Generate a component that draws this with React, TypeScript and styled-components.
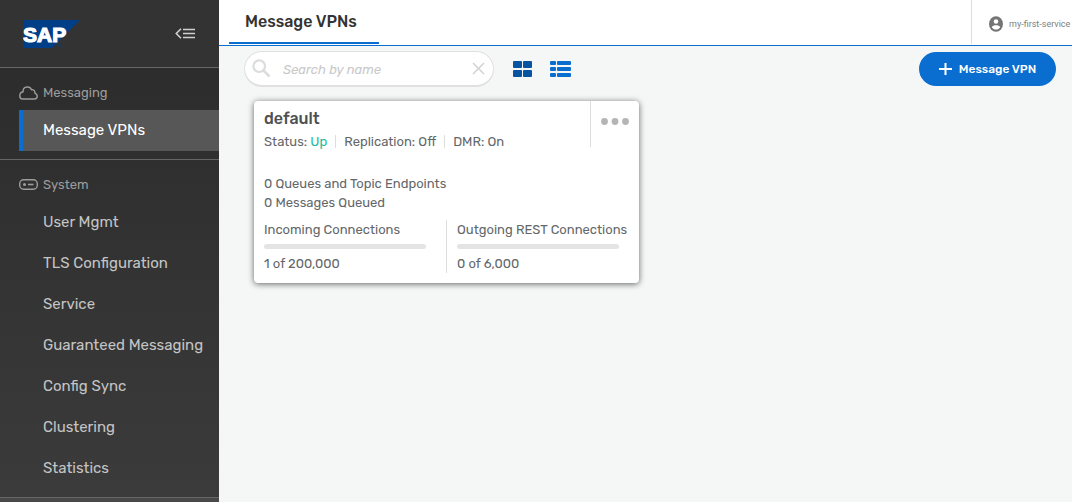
import React from 'react';
import styled, { createGlobalStyle } from 'styled-components';

const GlobalStyle = createGlobalStyle`
  *, *::before, *::after { box-sizing: border-box; }
  body {
    margin: 0;
    background: #f5f7f7;
    font-family: Rubik, Roboto, "Liberation Sans", sans-serif;
    color: #63676a;
  }
  button, input { font-family: inherit; }
  h1, h2, p, ul { margin: 0; padding: 0; font-weight: 400; }
  svg { display: block; flex: none; }
`;

const Page = styled.div`
  display: flex;
  height: 100vh;
  overflow: hidden;
`;

const Sidebar = styled.nav`
  flex: 0 0 219px;
  display: flex;
  flex-direction: column;
  overflow: hidden;
  background: linear-gradient(#2a2a2a, #3b3b3b);
`;

const Brand = styled.div`
  flex: none;
  display: flex;
  align-items: center;
  justify-content: space-between;
  height: 68px;
  padding: 0 24px 0 23px;
  background: #333;
  border-bottom: 1px solid #666;
`;

const IconButton = styled.button`
  display: flex;
  padding: 0;
  border: 0;
  background: none;
  cursor: pointer;
`;

const Section = styled.section`
  flex: none;
  padding-bottom: 8px;
  border-bottom: 1px solid #666;
`;

const SectionTitle = styled.h2`
  display: flex;
  align-items: center;
  gap: 5px;
  height: 42px;
  padding: 7px 0 0 19px;
  font-size: 13px;
  color: #9c9c9c;
`;

const NavList = styled.ul`
  list-style: none;
`;

const NavLink = styled.a<{ $active?: boolean }>`
  display: block;
  margin-left: 19px;
  padding-left: 20px;
  border-left: 4px solid ${(p) => (p.$active ? '#0a6ed1' : 'transparent')};
  background: ${(p) => (p.$active ? '#575757' : 'none')};
  color: ${(p) => (p.$active ? '#fff' : '#c4c4c4')};
  font-size: 15px;
  line-height: 41px;
  text-decoration: none;
  white-space: nowrap;
`;

const SidebarFoot = styled.div`
  flex: 1;
  background: #484848;
`;

const Main = styled.main`
  flex: 1;
  min-width: 0;
  display: flex;
  flex-direction: column;
`;

const Header = styled.header`
  flex: none;
  display: flex;
  justify-content: space-between;
  height: 46px;
  padding-left: 10px;
  background: #fff;
  border-bottom: 1px solid #0a6ed1;
`;

const Tab = styled.h1`
  width: 150px;
  height: 44px;
  padding-left: 16px;
  border-bottom: 2px solid #0a6ed1;
  color: #333;
  font-size: 16px;
  font-weight: 500;
  line-height: 43px;
  white-space: nowrap;
`;

const Account = styled.div`
  display: flex;
  align-items: center;
  gap: 5px;
  width: 101px;
  height: 44px;
  padding: 4px 0 0 16px;
  border-left: 1px solid #ddd;
  color: #808080;
  font-family: Roboto, sans-serif;
  font-size: 9px;
  white-space: nowrap;
`;

const Toolbar = styled.div`
  display: flex;
  align-items: center;
  gap: 19px;
  padding: 5px 16px 0 25px;
`;

const SearchBox = styled.label`
  display: flex;
  align-items: center;
  gap: 12px;
  width: 250px;
  height: 36px;
  padding: 0 8px 0 7px;
  border: 1px solid #e0e0e0;
  border-bottom-width: 2px;
  border-radius: 18px;
  background: #fff;
`;

const SearchInput = styled.input`
  flex: 1;
  min-width: 0;
  padding: 2px 0 0;
  border: 0;
  outline: 0;
  background: none;
  font-size: 13px;
  font-style: italic;
  &::placeholder { color: #c8c8c8; opacity: 1; }
`;

const ViewSwitch = styled.div`
  display: flex;
  gap: 18px;
`;

const CreateButton = styled.button`
  display: flex;
  align-items: center;
  justify-content: center;
  gap: 7px;
  width: 137px;
  height: 34px;
  margin-left: auto;
  padding: 0;
  border: 0;
  border-radius: 17px;
  background: #0a6ed1;
  color: #fff;
  font-size: 12px;
  font-weight: 500;
  white-space: nowrap;
`;

const CardList = styled.div`
  display: flex;
  flex-wrap: wrap;
  gap: 20px;
  padding: 14px 35px;
`;

const Card = styled.article`
  width: 385px;
  padding-bottom: 10px;
  border-radius: 4px;
  background: #fff;
  box-shadow: 0 1px 6px rgba(0, 0, 0, 0.6);
  font-size: 13px;
  line-height: 19px;
`;

const CardTop = styled.div`
  display: flex;
  justify-content: space-between;
  padding-left: 10px;
`;

const CardTitle = styled.h2`
  padding-top: 7px;
  color: #4e5153;
  font-size: 16px;
  font-weight: 500;
  line-height: 21px;
`;

const StatusRow = styled.div`
  display: flex;
  align-items: center;
  padding-top: 6px;
`;

const StatusItem = styled.span`
  line-height: 13px;
  & + & {
    margin-left: 8px;
    padding-left: 8px;
    border-left: 1px solid #ddd;
  }
`;

const Up = styled.span`
  color: #1abc9c;
`;

const CardMenu = styled.button`
  display: flex;
  align-items: flex-start;
  width: 49px;
  height: 46px;
  padding: 17px 0 0 10px;
  border: 0;
  border-left: 1px solid #ddd;
  background: none;
`;

const Counts = styled.div`
  padding: 26px 10px 8px;
`;

const Connections = styled.div`
  display: flex;
  padding-left: 10px;
`;

const Connection = styled.div`
  width: 182px;
  white-space: nowrap;
  & + & {
    width: 183px;
    padding-left: 10px;
    border-left: 1px solid #ddd;
  }
`;

const Meter = styled.div`
  width: 162px;
  height: 5px;
  margin: 5px 0 5px;
  border-radius: 3px;
  background: #e4e4e4;
`;

const systemItems = [
  'User Mgmt',
  'TLS Configuration',
  'Service',
  'Guaranteed Messaging',
  'Config Sync',
  'Clustering',
  'Statistics',
];

const SapLogo = () => (
  <svg width="57" height="28" viewBox="0 0 57 28" role="img" aria-label="SAP">
    <path d="M0 0H57L29 28H0Z" fill="#003f87" />
    <text
      x="0"
      y="22"
      fill="#fff"
      stroke="#fff"
      strokeWidth="1.200"
      fontFamily="Liberation Sans, sans-serif"
      fontWeight="700"
      fontSize="21"
    >
      SAP
    </text>
    <circle cx="37" cy="25.500" r="1.300" fill="none" stroke="#003f87" strokeWidth=".7" />
  </svg>
);

const CollapseIcon = () => (
  <svg width="20" height="12" viewBox="0 0 20 12" fill="none" stroke="#d0d0d0" strokeWidth="1.300">
    <path d="M6 .8L1.300 5.500L6 10.200" strokeWidth="1.600" />
    <path d="M8 1.500H20M8 5.500H20M8 9.500H20" />
  </svg>
);

const CloudIcon = () => (
  <svg width="19" height="14" viewBox="0 0 19 14" fill="none" stroke="#9c9c9c" strokeWidth="1.400" strokeLinejoin="round">
    <path d="M3.500 13H15.500C17.200 13 18.200 11.800 18.200 10.300C18.200 8.700 17.400 7.700 16 7.300C16.200 4.800 14.600 3.400 12.500 3.700C11.600 1.600 9.700.8 7.900 1C5.200 1.300 3.900 3.300 4.100 5.800C2 6.200.8 7.700.8 9.800C.8 11.900 2 13 3.500 13Z" />
  </svg>
);

const SystemIcon = () => (
  <svg width="19" height="11" viewBox="0 0 19 11" fill="none" stroke="#9c9c9c" strokeWidth="1.400">
    <rect x=".7" y=".7" width="17.600" height="9.600" rx="4" />
    <path d="M9 5.500H14.500" strokeWidth="1.600" />
    <circle cx="5.500" cy="5.500" r="1.500" fill="#9c9c9c" stroke="none" />
  </svg>
);

const SearchIcon = () => (
  <svg width="19" height="19" viewBox="0 0 19 19" fill="none" stroke="#dcdcdc" strokeWidth="2.200">
    <circle cx="7.200" cy="7.200" r="5.800" />
    <path d="M11.500 11.500L17.500 17.500" strokeWidth="2.600" />
  </svg>
);

const ClearIcon = () => (
  <svg width="13" height="13" viewBox="0 0 13 13" stroke="#d2d2d2" strokeWidth="1.500">
    <path d="M1 1L12 12M12 1L1 12" />
  </svg>
);

const GridIcon = () => (
  <svg width="19" height="16" viewBox="0 0 19 16" fill="#0854a0">
    <rect width="9" height="7" rx="1" />
    <rect x="10" width="9" height="7" rx="1" />
    <rect y="9" width="9" height="7" rx="1" />
    <rect x="10" y="9" width="9" height="7" rx="1" />
  </svg>
);

const ListIcon = () => (
  <svg width="21" height="16" viewBox="0 0 21 16" fill="#0a6ed1">
    {[0, 6, 12].map((y) => (
      <g key={y}>
        <rect y={y} width="6" height="4" rx="1" />
        <rect x="7" y={y} width="14" height="4" rx="1" />
      </g>
    ))}
  </svg>
);

const UserIcon = () => (
  <svg width="16" height="16" viewBox="0 0 16 16">
    <ellipse cx="8" cy="8" rx="7" ry="7.700" fill="#757575" />
    <circle cx="8" cy="5.500" r="2.300" fill="#fff" />
    <path d="M3.800 11.200C4.800 8.700 11.200 8.700 12.200 11.200C11.200 12.900 9.700 13.600 8 13.600S4.800 12.900 3.800 11.200Z" fill="#fff" />
  </svg>
);

const PlusIcon = () => (
  <svg width="13" height="12" viewBox="0 0 13 12" stroke="#fff" strokeWidth="2">
    <path d="M0 6H13M6.500 0V12" />
  </svg>
);

const DotsIcon = () => (
  <svg width="28" height="7" viewBox="0 0 28 7" fill="#b5b5b5">
    <circle cx="3.500" cy="3.500" r="3.400" />
    <circle cx="14" cy="3.500" r="3.400" />
    <circle cx="24.500" cy="3.500" r="3.400" />
  </svg>
);

export default function App() {
  return (
    <>
      <GlobalStyle />
      <Page>
        <Sidebar>
          <Brand>
            <SapLogo />
            <IconButton aria-label="Collapse menu">
              <CollapseIcon />
            </IconButton>
          </Brand>
          <Section>
            <SectionTitle>
              <CloudIcon />
              Messaging
            </SectionTitle>
            <NavList>
              <li>
                <NavLink href="#vpns" $active>Message VPNs</NavLink>
              </li>
            </NavList>
          </Section>
          <Section>
            <SectionTitle>
              <SystemIcon />
              System
            </SectionTitle>
            <NavList>
              {systemItems.map((item) => (
                <li key={item}>
                  <NavLink href="#system">{item}</NavLink>
                </li>
              ))}
            </NavList>
          </Section>
          <SidebarFoot />
        </Sidebar>
        <Main>
          <Header>
            <Tab>Message VPNs</Tab>
            <Account>
              <UserIcon />
              my-first-service
            </Account>
          </Header>
          <Toolbar>
            <SearchBox>
              <SearchIcon />
              <SearchInput type="text" placeholder="Search by name" aria-label="Search by name" />
              <IconButton aria-label="Clear search">
                <ClearIcon />
              </IconButton>
            </SearchBox>
            <ViewSwitch>
              <IconButton aria-label="Card view">
                <GridIcon />
              </IconButton>
              <IconButton aria-label="List view">
                <ListIcon />
              </IconButton>
            </ViewSwitch>
            <CreateButton>
              <PlusIcon />
              Message VPN
            </CreateButton>
          </Toolbar>
          <CardList>
            <Card>
              <CardTop>
                <div>
                  <CardTitle>default</CardTitle>
                  <StatusRow>
                    <StatusItem>Status: <Up>Up</Up></StatusItem>
                    <StatusItem>Replication: Off</StatusItem>
                    <StatusItem>DMR: On</StatusItem>
                  </StatusRow>
                </div>
                <CardMenu aria-label="More actions">
                  <DotsIcon />
                </CardMenu>
              </CardTop>
              <Counts>
                <p>0 Queues and Topic Endpoints</p>
                <p>0 Messages Queued</p>
              </Counts>
              <Connections>
                <Connection>
                  <p>Incoming Connections</p>
                  <Meter />
                  <p>1 of 200,000</p>
                </Connection>
                <Connection>
                  <p>Outgoing REST Connections</p>
                  <Meter />
                  <p>0 of 6,000</p>
                </Connection>
              </Connections>
            </Card>
          </CardList>
        </Main>
      </Page>
    </>
  );
}
